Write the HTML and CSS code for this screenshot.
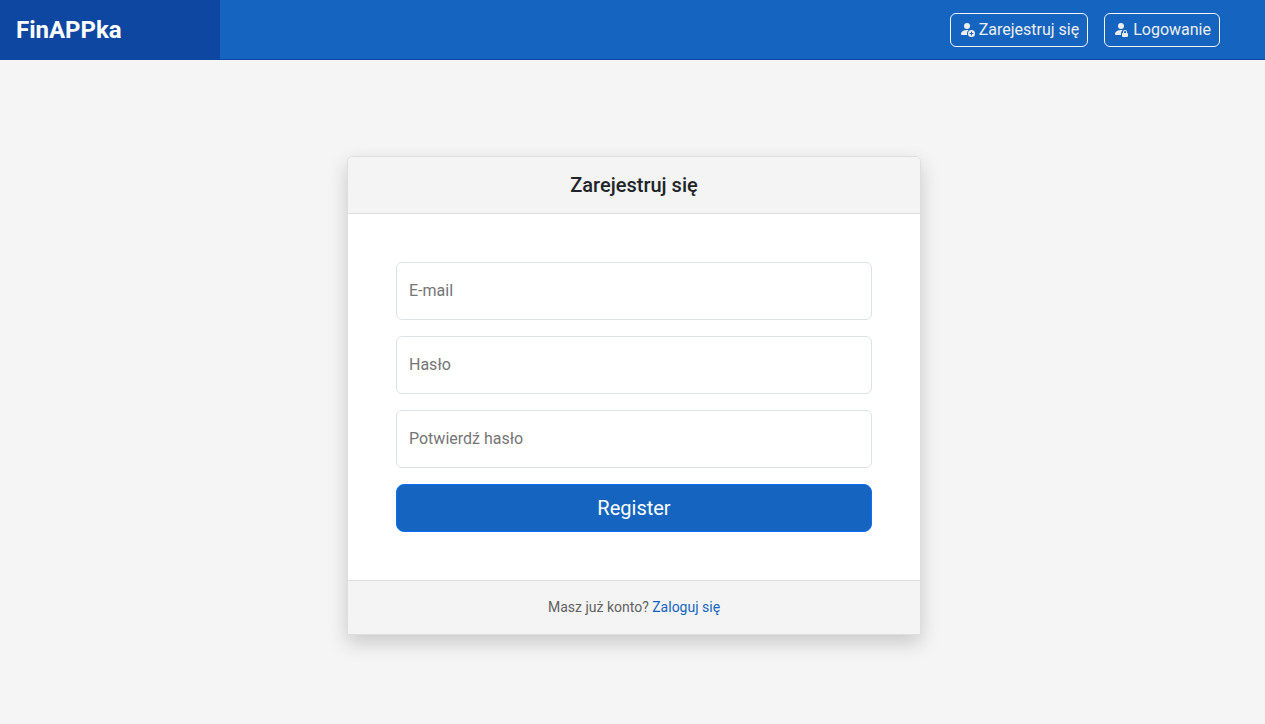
FILE: index.html
```html
<!DOCTYPE html>
<html lang="pl">
<head>
<meta charset="utf-8">
<meta name="viewport" content="width=device-width, initial-scale=1">
<title>FinAPPka</title>
<link rel="stylesheet" href="styles.css">
</head>
<body>
<header class="topbar">
  <a class="brand" href="#">FinAPPka</a>
  <nav class="topnav">
    <a class="nav-button" href="#register">
      <svg class="icon" viewBox="0 1 16 16" fill="currentColor" aria-hidden="true"><path d="M12.5 16a3.5 3.5 0 1 0 0-7 3.5 3.5 0 0 0 0 7Zm.5-5v1h1a.5.5 0 0 1 0 1h-1v1a.5.5 0 1 1-1 0v-1h-1a.5.5 0 0 1 0-1h1v-1a.5.5 0 0 1 1 0Zm-2-6a3 3 0 1 1-6 0 3 3 0 0 1 6 0Z"/><path d="M2 13c0 1 1 1 1 1h5.256A4.493 4.493 0 0 1 8 12.5a4.49 4.49 0 0 1 1.544-3.393C9.077 9.038 8.564 9 8 9c-5 0-6 3-6 4Z"/></svg>
      <span>Zarejestruj się</span>
    </a>
    <a class="nav-button" href="#login">
      <svg class="icon" viewBox="0 1 16 16" fill="currentColor" aria-hidden="true"><path d="M11 5a3 3 0 1 1-6 0 3 3 0 0 1 6 0m-9 8c0 1 1 1 1 1h5v-1a1.9 1.9 0 0 1 .01-.2 4.49 4.49 0 0 1 1.534-3.693C9.077 9.038 8.564 9 8 9c-5 0-6 3-6 4m7 0a1 1 0 0 1 1-1v-1a2 2 0 1 1 4 0v1a1 1 0 0 1 1 1v2a1 1 0 0 1-1 1h-4a1 1 0 0 1-1-1zm3-3a1 1 0 0 0-1 1v1h2v-1a1 1 0 0 0-1-1"/></svg>
      <span>Logowanie</span>
    </a>
  </nav>
</header>
<main class="page">
  <section class="card" id="register">
    <div class="card-header"><h1 class="card-title">Zarejestruj się</h1></div>
    <form class="card-body">
      <input class="field" type="email" placeholder="E-mail" aria-label="E-mail">
      <input class="field" type="password" placeholder="Hasło" aria-label="Hasło">
      <input class="field" type="password" placeholder="Potwierdź hasło" aria-label="Potwierdź hasło">
      <button class="submit" type="submit">Register</button>
    </form>
    <p class="card-footer">Masz już konto? <a class="link" href="#login">Zaloguj się</a></p>
  </section>
</main>
</body>
</html>
```
FILE: styles.css
```css
*,
*::before,
*::after {
  box-sizing: border-box;
}

body {
  margin: 0;
  min-height: 100vh;
  background: #f5f5f5;
  color: #212529;
  font: 16px/24px Roboto, sans-serif;
}

.topbar {
  display: flex;
  align-items: stretch;
  justify-content: space-between;
  height: 60px;
  border-bottom: 1px solid #0d47a1;
  background: #1565c0;
}

.brand {
  display: flex;
  align-items: center;
  width: 220px;
  padding: 0 16px;
  background: #0d47a1;
  color: #fff;
  font-size: 24px;
  font-weight: 700;
  text-decoration: none;
}

.topnav {
  display: flex;
  align-items: center;
  gap: 16px;
  padding-right: 45px;
}

.nav-button {
  display: flex;
  align-items: center;
  gap: 4px;
  padding: 4px 8px;
  border: 1px solid #f5f5f5;
  border-radius: 6px;
  color: #eee;
  text-decoration: none;
}

.icon {
  width: 16px;
  height: 16px;
}

.page {
  display: flex;
  justify-content: center;
  padding: 96px 12px 88px 15px;
}

.card {
  width: 100%;
  max-width: 574px;
  border: 1px solid #dedede;
  border-radius: 6px 6px 0 0;
  background: #fff;
  box-shadow: 0 8px 20px rgba(0, 0, 0, 0.18);
}

.card-header {
  padding: 16px;
  border-bottom: 1px solid #dedede;
  border-radius: 5px 5px 0 0;
  background: #f4f4f4;
  text-align: center;
}

.card-title {
  margin: 0;
  font-size: 20px;
  font-weight: 500;
  line-height: 24px;
}

.card-body {
  display: flex;
  flex-direction: column;
  gap: 16px;
  padding: 48px;
}

.field {
  height: 58px;
  padding: 15px 12px 17px;
  border: 1px solid #dee2e6;
  border-radius: 6px;
  background: #fff;
  color: #212529;
  font: inherit;
}

.field::placeholder {
  color: #757575;
  opacity: 1;
}

.submit {
  padding: 8px 16px;
  border: 1px solid #0d6efd;
  border-radius: 8px;
  background: #1565c0;
  color: #fff;
  font: 20px/30px Roboto, sans-serif;
  cursor: pointer;
}

.card-footer {
  margin: 0;
  padding: 16px;
  border-top: 1px solid #dedede;
  background: #f4f4f4;
  color: #616161;
  font-size: 14px;
  line-height: 21px;
  text-align: center;
}

.link {
  color: #1565c0;
  text-decoration: none;
}
```
